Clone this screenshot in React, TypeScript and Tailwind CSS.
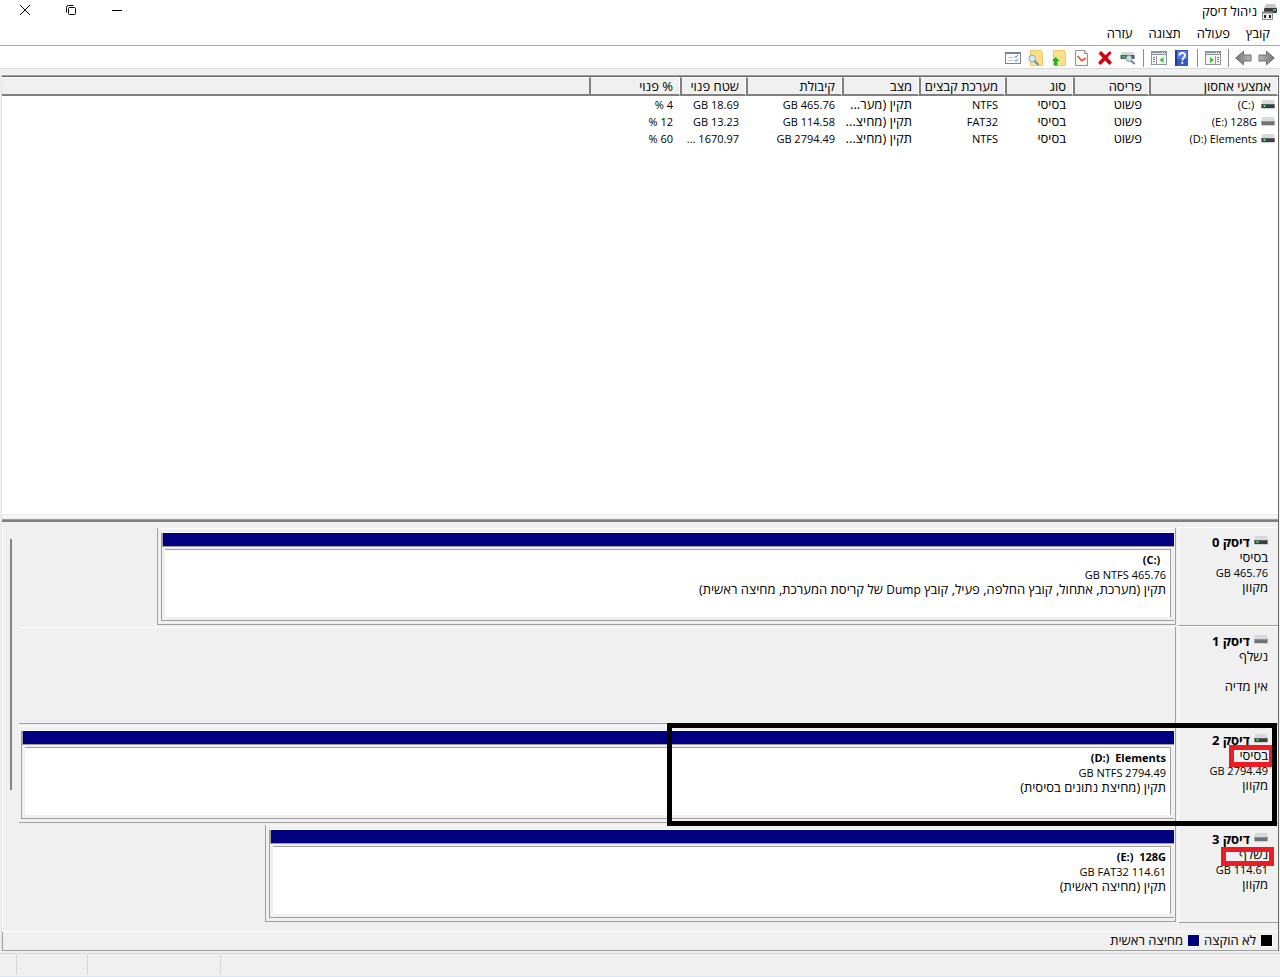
import React from "react";

type Volume = {
  name: string;
  layout: string;
  kind: string;
  fs: string;
  status: string;
  capacity: string;
  free: string;
  percent: string;
  active: boolean;
};

const volumes: Volume[] = [
  { name: "(C:)\u00a0", layout: "פשוט", kind: "בסיסי", fs: "NTFS", status: "תקין (מער...", capacity: "465.76 GB", free: "18.69 GB", percent: "4 %", active: true },
  { name: "(E:) 128G", layout: "פשוט", kind: "בסיסי", fs: "FAT32", status: "תקין (מחיצ...", capacity: "114.58 GB", free: "13.23 GB", percent: "12 %", active: false },
  { name: "(D:) Elements", layout: "פשוט", kind: "בסיסי", fs: "NTFS", status: "תקין (מחיצ...", capacity: "2794.49 GB", free: "1670.97 ...", percent: "60 %", active: true },
];

const headings = ["אמצעי אחסון", "פריסה", "סוג", "מערכת קבצים", "מצב", "קיבולת", "שטח פנוי", "% פנוי", ""];

type Disk = {
  title: string;
  media: string;
  size: string;
  state: string;
  active: boolean;
  share: number;
  volume?: { name: string; size: string; status: React.ReactNode };
  framed?: boolean;
  mark?: "basic" | "removable";
};

const disks: Disk[] = [
  {
    title: "דיסק 0",
    media: "בסיסי",
    size: "465.76 GB",
    state: "מקוון",
    active: true,
    share: 88.1,
    volume: {
      name: "(C:)\u00a0\u00a0",
      size: "465.76 GB NTFS",
      status: (
        <>
          תקין (מערכת, אתחול, קובץ החלפה, פעיל, קובץ <span className="text-xs leading-[15px]">Dump</span> של קריסת המערכת, מחיצה ראשית)
        </>
      ),
    },
  },
  { title: "דיסק 1", media: "נשלף", size: "", state: "אין מדיה", active: false, share: 100 },
  {
    title: "דיסק 2",
    media: "בסיסי",
    size: "2794.49 GB",
    state: "מקוון",
    active: true,
    share: 100,
    volume: { name: "(D:)  Elements", size: "2794.49 GB NTFS", status: "תקין (מחיצת נתונים בסיסית)" },
    framed: true,
    mark: "basic",
  },
  {
    title: "דיסק 3",
    media: "נשלף",
    size: "114.61 GB",
    state: "מקוון",
    active: false,
    share: 78.7,
    volume: { name: "(E:)  128G", size: "114.61 GB FAT32", status: "תקין (מחיצה ראשית)" },
    mark: "removable",
  },
];

function DriveIcon({ active }: { active: boolean }) {
  return (
    <svg width="14" height="9" viewBox="0 0 14 9" className="shrink-0" aria-hidden="true">
      <path d="M1 0h12l.6 4H.4z" fill="#d6dade" />
      <rect x=".4" y="4" width="13.200" height="4" fill={active ? "#3b3f42" : "#6f7174"} />
      <rect x=".4" y="4" width="13.200" height="1" fill={active ? "#5c6265" : "#8f9194"} />
      <rect x=".4" y="8" width="13.200" height="1" fill="#d0d3d6" />
      {active && <rect x="2" y="5" width="3" height="2" fill="#2b9c33" />}
      {active && <rect x="3" y="5" width="1" height="2" fill="#4cf554" />}
    </svg>
  );
}

function AppIcon() {
  return (
    <svg width="17" height="16" viewBox="0 0 17 16" aria-hidden="true">
      <path d="M5 0h9l2 4H3z" fill="#c3c7ca" />
      <rect x="3" y="4" width="13" height="5" rx="1" fill="#3a3d40" />
      <rect x="12" y="5" width="3" height="2" fill="#35c93d" />
      <path d="M1.500 8.500h10v7h-10z" fill="#efefef" stroke="#8a8a8a" />
      <path d="M1 7.500h11v2H1z" fill="#8a8a8a" />
      <rect x="3" y="11" width="2" height="3" fill="#222" />
      <rect x="8" y="11" width="2" height="3" fill="#222" />
    </svg>
  );
}

function Arrow({ flip }: { flip?: boolean }) {
  return (
    <svg width="17" height="16" viewBox="0 0 17 16" className={flip ? "-scale-x-100" : ""} aria-hidden="true">
      <defs>
        <linearGradient id={flip ? "steel-b" : "steel-a"} x1="0" y1="0" x2="1" y2="0">
          <stop offset="0" stopColor="#b5b5b5" />
          <stop offset="1" stopColor="#747474" />
        </linearGradient>
      </defs>
      <path
        d="M1 5h7.500V1.200L16.300 8l-7.800 6.800V11H1z"
        fill={flip ? "url(#steel-b)" : "url(#steel-a)"}
        stroke="#6e6e6e"
        strokeLinejoin="round"
      />
    </svg>
  );
}

function PaneIcon({ side }: { side: "right" | "left" }) {
  return (
    <svg width="16" height="14" viewBox="0 0 16 14" aria-hidden="true">
      <rect x=".5" y=".5" width="15" height="13" fill="#f6f6f6" stroke="#8d959d" />
      <rect x="1" y="1" width="14" height="3" fill="#dde1e5" />
      <path d="M1 1.500h10" stroke="#8d959d" />
      <path d="M12 1.500h1M14 1.500h1" stroke="#5c6c7c" />
      <path d="M1 3.500h14" stroke="#8d959d" />
      {side === "right" ? (
        <>
          <path d="M10.500 5v9" stroke="#8d959d" />
          <path d="M12 6.500h2M12 8.500h2M12 10.500h2" stroke="#4b80b8" />
          <path d="M5 6v6l4-3z" fill="#3cc62a" />
        </>
      ) : (
        <>
          <path d="M5.500 5v9" stroke="#8d959d" />
          <path d="M2 6.500h2M2 8.500h2M2 10.500h2" stroke="#4b80b8" />
          <path d="M12.500 6v6l-4-3z" fill="#3cc62a" />
        </>
      )}
    </svg>
  );
}

function HelpIcon() {
  return (
    <svg width="13" height="16" viewBox="0 0 13 16" aria-hidden="true">
      <rect width="13" height="16" fill="#3458c8" />
      <rect width="2" height="16" fill="#263f96" />
      <rect x="2" y="1" width="10" height="8" fill="#5577de" />
      <path d="M4.500 5.500c0-3.500 5.500-3.500 5.500 0 0 2-2.700 2-2.700 5" fill="none" stroke="#fff" strokeWidth="1.900" />
      <rect x="6.300" y="11.800" width="2" height="2" fill="#fff" />
    </svg>
  );
}

function ConnectIcon() {
  return (
    <svg width="16" height="14" viewBox="0 0 16 14" aria-hidden="true">
      <path d="M1.500 1h12l1 3H.5z" fill="#d3d7db" />
      <rect x=".5" y="4" width="14" height="4" fill="#55595d" />
      <rect x="2" y="5" width="3" height="2" fill="#2fc437" />
      <circle cx="9" cy="7.500" r="3" fill="#c3dff2" stroke="#8396a3" />
      <path d="M11.200 9.800l3.500 3.400" stroke="#6c7a85" strokeWidth="1.800" />
    </svg>
  );
}

function DeleteIcon() {
  return (
    <svg width="14" height="14" viewBox="0 0 14 14" aria-hidden="true">
      <path d="M3 0l4.500 4.300L12 0l1.500 2L9.600 6.600 14 11.600 11.500 14 7 9.400 2.500 14 0 11.700l4.600-5L.6 2.500z" fill="#d4000f" />
    </svg>
  );
}

function CheckPageIcon() {
  return (
    <svg width="13" height="16" viewBox="0 0 13 16" aria-hidden="true">
      <path d="M.5.5h9l3 3v12H.5z" fill="#fbfbfb" stroke="#929292" />
      <path d="M9.500.5v3h3" fill="#ddd" stroke="#929292" />
      <path d="M2.500 6l4.300 4.700L11 8" fill="none" stroke="#e8531c" strokeWidth="1.700" />
    </svg>
  );
}

function FolderUpIcon() {
  return (
    <svg width="14" height="16" viewBox="0 0 14 16" aria-hidden="true">
      <path d="M1.500.5h11v2h1v13h-12z" fill="#fbdf8a" stroke="#ecc868" />
      <path d="M3.700 7L7.500 11H5.300v4.500H2.200V11H0z" fill="#1fac22" />
    </svg>
  );
}

function FolderFindIcon() {
  return (
    <svg width="15" height="16" viewBox="0 0 15 16" aria-hidden="true">
      <path d="M2.500.5h11v2h1v13h-12z" fill="#fbdf8a" stroke="#ecc868" />
      <circle cx="4.200" cy="8.500" r="3.300" fill="#d3eafa" stroke="#86aac6" />
      <path d="M6.600 11l4 4" stroke="#7b8790" strokeWidth="1.800" />
    </svg>
  );
}

function ListIcon() {
  return (
    <svg width="16" height="12" viewBox="0 0 16 12" aria-hidden="true">
      <rect x=".5" y=".5" width="15" height="11" fill="#fbfbfb" stroke="#7d858d" />
      <rect x="0" y="0" width="16" height="2" fill="#7d858d" />
      <path d="M3 5.500h5M3 8.500h5" stroke="#c3c6c9" />
      <path d="M9.500 4l1.500 1.500L13 3M9.500 8l1.500 1.500L13 7" fill="none" stroke="#3a8fdc" />
    </svg>
  );
}

function Tool({ label, children }: { label: string; children: React.ReactNode }) {
  return (
    <button type="button" aria-label={label} className="flex h-5 w-[23px] items-center justify-center">
      {children}
    </button>
  );
}

function Separator() {
  return (
    <div className="flex h-[18px] w-2 justify-center">
      <div className="w-px bg-[#8d8d8d]" />
    </div>
  );
}

function VolumeBox({ volume, full }: { volume: NonNullable<Disk["volume"]>; full: boolean }) {
  return (
    <div
      className={
        full
          ? "flex h-full flex-col border-t border-white pt-[3px] pr-px pb-[3px] pl-[2px]"
          : "flex h-full flex-col border-t border-white pt-[3px] pr-px pb-[3px] pl-[3px]"
      }
    >
      <div className="flex flex-1 flex-col border-t border-b border-l border-[#a0a0a0] border-t-white">
        <div className="h-[14px] border-b border-l border-b-[#a0a0a0] border-l-[#a0a0a0] bg-[#000080]" />
        <div className="mt-[2px] mr-[3px] mb-[3px] ml-[3px] flex-1 border-t border-r border-[#a0a0a0] bg-white pt-[2px] pr-1 leading-[15px]">
          <div className="text-[11px] font-bold">
            <bdi dir="ltr" className="whitespace-pre">{volume.name}</bdi>
          </div>
          <div className="text-[11px]">{volume.size}</div>
          <div className="whitespace-nowrap">{volume.status}</div>
        </div>
      </div>
    </div>
  );
}

function DiskRow({ disk }: { disk: Disk }) {
  return (
    <div className="relative flex h-[99px]">
      <div className="relative w-[100px] shrink-0 border-t border-b border-l border-white border-b-[#a0a0a0] pt-[7px] pr-[10px] leading-[15px]">
        <div className="flex gap-1">
          <span className="pt-px"><DriveIcon active={disk.active} /></span>
          <span className="font-bold">{disk.title}</span>
        </div>
        <div className="h-[15px]">{disk.media}</div>
        <div className="h-[15px] text-[11px]">{disk.size}</div>
        <div className="h-[15px]">{disk.state}</div>
        {disk.mark === "basic" && <div className="absolute top-[19px] right-1 h-[22px] w-[45px] border-[5px] border-[#ed1c24]" />}
        {disk.mark === "removable" && <div className="absolute top-[22px] right-1 h-[19px] w-[53px] border-[5px] border-[#ed1c24]" />}
      </div>
      <div className="mt-px mr-[2px] mb-px min-w-0 flex-1 border-r border-[#a0a0a0]">
        <div
          className={
            disk.share < 100
              ? "h-[97px] border-b border-l border-[#a0a0a0]"
              : "h-[97px] border-b border-[#a0a0a0]"
          }
          style={{ width: `${disk.share}%` }}
        >
          {disk.volume ? <VolumeBox volume={disk.volume} full={disk.share === 100} /> : <div className="border-t border-white" />}
        </div>
      </div>
      {disk.framed && <div className="absolute -top-[2px] right-px z-10 h-[103px] w-[610px] border-[5px] border-black" />}
    </div>
  );
}

const menu = ["קובץ", "פעולה", "תצוגה", "עזרה"];

export default function App() {
  return (
    <div
      dir="rtl"
      className="flex min-h-screen flex-col bg-[#f0f0f0] text-[13px] text-black [font-family:'Open_Sans','Noto_Sans','Liberation_Sans',sans-serif]"
    >
      <header className="bg-white">
        <div className="flex h-6 items-start justify-between">
          <div className="flex h-6 items-center gap-1 pr-[2px]">
            <AppIcon />
            <h1>ניהול דיסק</h1>
          </div>
          <div className="flex pl-[2px]">
            <button type="button" aria-label="מזער" className="flex h-5 w-[46px] items-center justify-center">
              <svg width="10" height="10" viewBox="0 0 10 10" shapeRendering="crispEdges"><path d="M0 5.500h10" stroke="#000" /></svg>
            </button>
            <button type="button" aria-label="שחזר" className="flex h-5 w-[46px] items-center justify-center">
              <svg width="10" height="10" viewBox="0 0 10 10" fill="none" stroke="#000">
                <rect x="2.500" y="2.500" width="7" height="7" rx="1" />
                <path d="M.5 7.500V2.500a2 2 0 0 1 2-2h5" />
              </svg>
            </button>
            <button type="button" aria-label="סגור" className="flex h-5 w-[46px] items-center justify-center">
              <svg width="10" height="10" viewBox="0 0 10 10" stroke="#000"><path d="M0 0l10 10M10 0L0 10" /></svg>
            </button>
          </div>
        </div>
        <nav className="flex h-[22px] items-start gap-4 border-b border-[#ababb0] pr-[10px] leading-[18px]">
          {menu.map((item) => (
            <button key={item} type="button">{item}</button>
          ))}
        </nav>
        <div className="flex h-[23px] items-center border-b border-[#d9d9d9] pt-[2px] pr-[2px]">
          <Tool label="אחורה"><Arrow /></Tool>
          <Tool label="קדימה"><Arrow flip /></Tool>
          <Separator />
          <Tool label="עץ המסוף"><PaneIcon side="right" /></Tool>
          <Separator />
          <Tool label="עזרה"><HelpIcon /></Tool>
          <Tool label="חלונית פעולות"><PaneIcon side="left" /></Tool>
          <Separator />
          <Tool label="סרוק מחדש"><ConnectIcon /></Tool>
          <Tool label="מחק"><DeleteIcon /></Tool>
          <Tool label="מאפיינים"><CheckPageIcon /></Tool>
          <Tool label="פתח"><FolderUpIcon /></Tool>
          <Tool label="סייר"><FolderFindIcon /></Tool>
          <Tool label="הגדרות"><ListIcon /></Tool>
        </div>
      </header>

      <main className="mt-[6px] mr-px ml-px flex flex-1 flex-col border-t border-r border-l border-[#a0a0a0] border-r-[#696969] border-l-[#e3e3e3]">
        <section className="flex-1 border-t border-[#696969] bg-white">
          <table className="w-full table-fixed border-separate border-spacing-0">
            <colgroup>
              <col className="w-[129px]" />
              <col className="w-[76px]" />
              <col className="w-[68px]" />
              <col className="w-[86px]" />
              <col className="w-[77px]" />
              <col className="w-[96px]" />
              <col className="w-[66px]" />
              <col className="w-[91px]" />
              <col />
            </colgroup>
            <thead>
              <tr>
                {headings.map((h, i) => (
                  <th
                    key={i}
                    scope="col"
                    className={
                      i < headings.length - 1
                        ? "border-t border-r border-b-2 border-l-2 border-white border-b-[#808080] border-l-[#808080] bg-[#f0f0f0] pt-px pb-px pr-[6px] text-right leading-[14px] font-normal whitespace-nowrap"
                        : "border-t border-b-2 border-white border-b-[#808080] bg-[#f0f0f0]"
                    }
                  >
                    {h}
                  </th>
                ))}
              </tr>
            </thead>
            <tbody>
              {volumes.map((v) => (
                <tr key={v.name} className="h-[17px] leading-[17px] whitespace-nowrap">
                  <td className="pr-[3px] text-[11px]">
                    <div className="flex items-center gap-1">
                      <DriveIcon active={v.active} />
                      <bdi dir="ltr" className="whitespace-pre">{v.name}</bdi>
                    </div>
                  </td>
                  <td className="pr-[7px]">{v.layout}</td>
                  <td className="pr-[7px]">{v.kind}</td>
                  <td className="pr-[7px] text-[11px]">{v.fs}</td>
                  <td className="pr-[7px]">{v.status}</td>
                  <td className="pr-[7px] text-[11px]">{v.capacity}</td>
                  <td className="pr-[7px] text-[11px]">{v.free}</td>
                  <td className="pr-[7px] text-[11px]">{v.percent}</td>
                  <td />
                </tr>
              ))}
            </tbody>
          </table>
        </section>

        <div className="h-[8px] border-b-2 border-[#808080] pt-[2px]">
          <div className="h-full border-t border-b border-white border-b-[#a0a0a0]" />
        </div>

        <section className="flex border-l border-white pt-[5px] pb-2">
          <div className="min-w-0 flex-1">
            {disks.map((d) => (
              <DiskRow key={d.title} disk={d} />
            ))}
          </div>
          <div className="flex w-4 justify-center pt-3">
            <div className="h-[251px] w-[2px] bg-[#858585]" />
          </div>
        </section>

        <footer className="flex h-5 items-center gap-1 border-t border-b border-l border-white border-b-[#a0a0a0] border-l-[#a0a0a0] pr-[5px]">
          <span className="flex items-center gap-[5px]">
            <i className="h-3 w-3 border-r border-b border-white bg-black" />
            לא הוקצה
          </span>
          <span className="flex items-center gap-[5px]">
            <i className="h-3 w-3 border-r border-b border-white bg-[#000080]" />
            מחיצה ראשית
          </span>
        </footer>
      </main>

      <div dir="ltr" className="mt-[2px] flex h-6 border-t border-b border-[#d7d7d7] border-b-[#dde6f2] pt-px pb-px">
        <div className="w-[17px] border-r border-[#d7d7d7]" />
        <div className="w-[71px] border-r border-[#d7d7d7]" />
        <div className="w-[133px] border-r border-[#d7d7d7]" />
      </div>
    </div>
  );
}
